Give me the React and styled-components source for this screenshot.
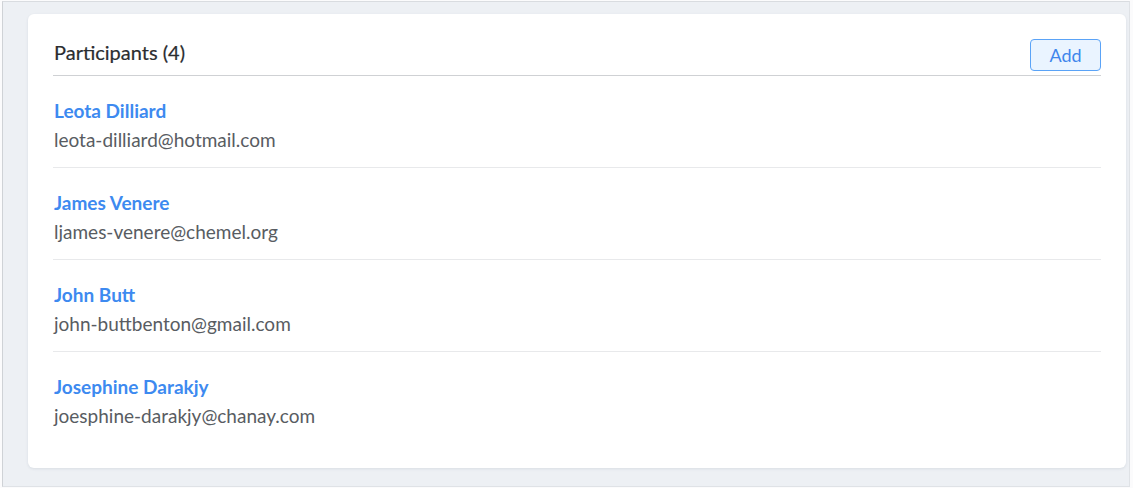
import styled, { createGlobalStyle } from "styled-components";

const GlobalStyle = createGlobalStyle`
  html, body {
    margin: 0;
    padding: 0;
    background: #fbfbfc;
  }
  body {
    font-family: Lato, "Open Sans", sans-serif;
  }
  * {
    box-sizing: border-box;
  }
`;

const Page = styled.div`
  margin: 1px 3px 1px 2px;
  height: 486px;
  border-top: 1px solid #d9dce0;
  border-left: 1px solid #cfd2d6;
  border-right: 1px solid #dfe2e6;
  border-bottom: 1px solid #dfe2e6;
  background: #edf0f4;
  padding: 12px 4px 0 25px;
`;

const Card = styled.div`
  background: #fff;
  border-radius: 6px;
  box-shadow: 0 1px 3px rgba(40, 60, 90, 0.1);
  padding: 25px;
  width: 1098px;
`;

const Header = styled.div`
  display: flex;
  justify-content: space-between;
  align-items: flex-start;
  padding-bottom: 4px;
  border-bottom: 1px solid #cfd1d4;
`;

const Title = styled.h2`
  margin: 0 0 0 1px;
  font-size: 20px;
  font-weight: 400;
  line-height: 26px;
  color: #2b2d30;
  -webkit-text-stroke: 0.2px #2b2d30;
`;

const AddButton = styled.button`
  width: 71px;
  height: 32px;
  border: 1px solid #5aa3f7;
  border-radius: 4px;
  background: #eaf4ff;
  color: #3f86ec;
  font-family: Lato, "Open Sans", sans-serif;
  font-size: 18px;
  padding: 0;
  cursor: pointer;
`;

const List = styled.ul`
  list-style: none;
  margin: 0;
  padding: 0;
`;

const Item = styled.li`
  padding: 22px 0 14px 1px;
  border-bottom: ${(p) => (p.$last ? "none" : "1px solid #e8e9eb")};
`;

const Name = styled.a`
  display: block;
  font-size: 19px;
  font-weight: 700;
  line-height: 26px;
  color: #3d8af0;
  text-decoration: none;
`;

const Email = styled.div`
  margin-top: 3px;
  font-size: 19px;
  line-height: 26px;
  color: #585c62;
`;

const participants = [
  { name: "Leota Dilliard", email: "leota-dilliard@hotmail.com" },
  { name: "James Venere", email: "ljames-venere@chemel.org" },
  { name: "John Butt", email: "john-buttbenton@gmail.com" },
  { name: "Josephine Darakjy", email: "joesphine-darakjy@chanay.com" },
];

export default function App() {
  return (
    <>
      <GlobalStyle />
      <Page>
        <Card>
          <Header>
            <Title>Participants ({participants.length})</Title>
            <AddButton type="button">Add</AddButton>
          </Header>
          <List>
            {participants.map((p, i) => (
              <Item key={p.email} $last={i === participants.length - 1}>
                <Name href="#">{p.name}</Name>
                <Email>{p.email}</Email>
              </Item>
            ))}
          </List>
        </Card>
      </Page>
    </>
  );
}
